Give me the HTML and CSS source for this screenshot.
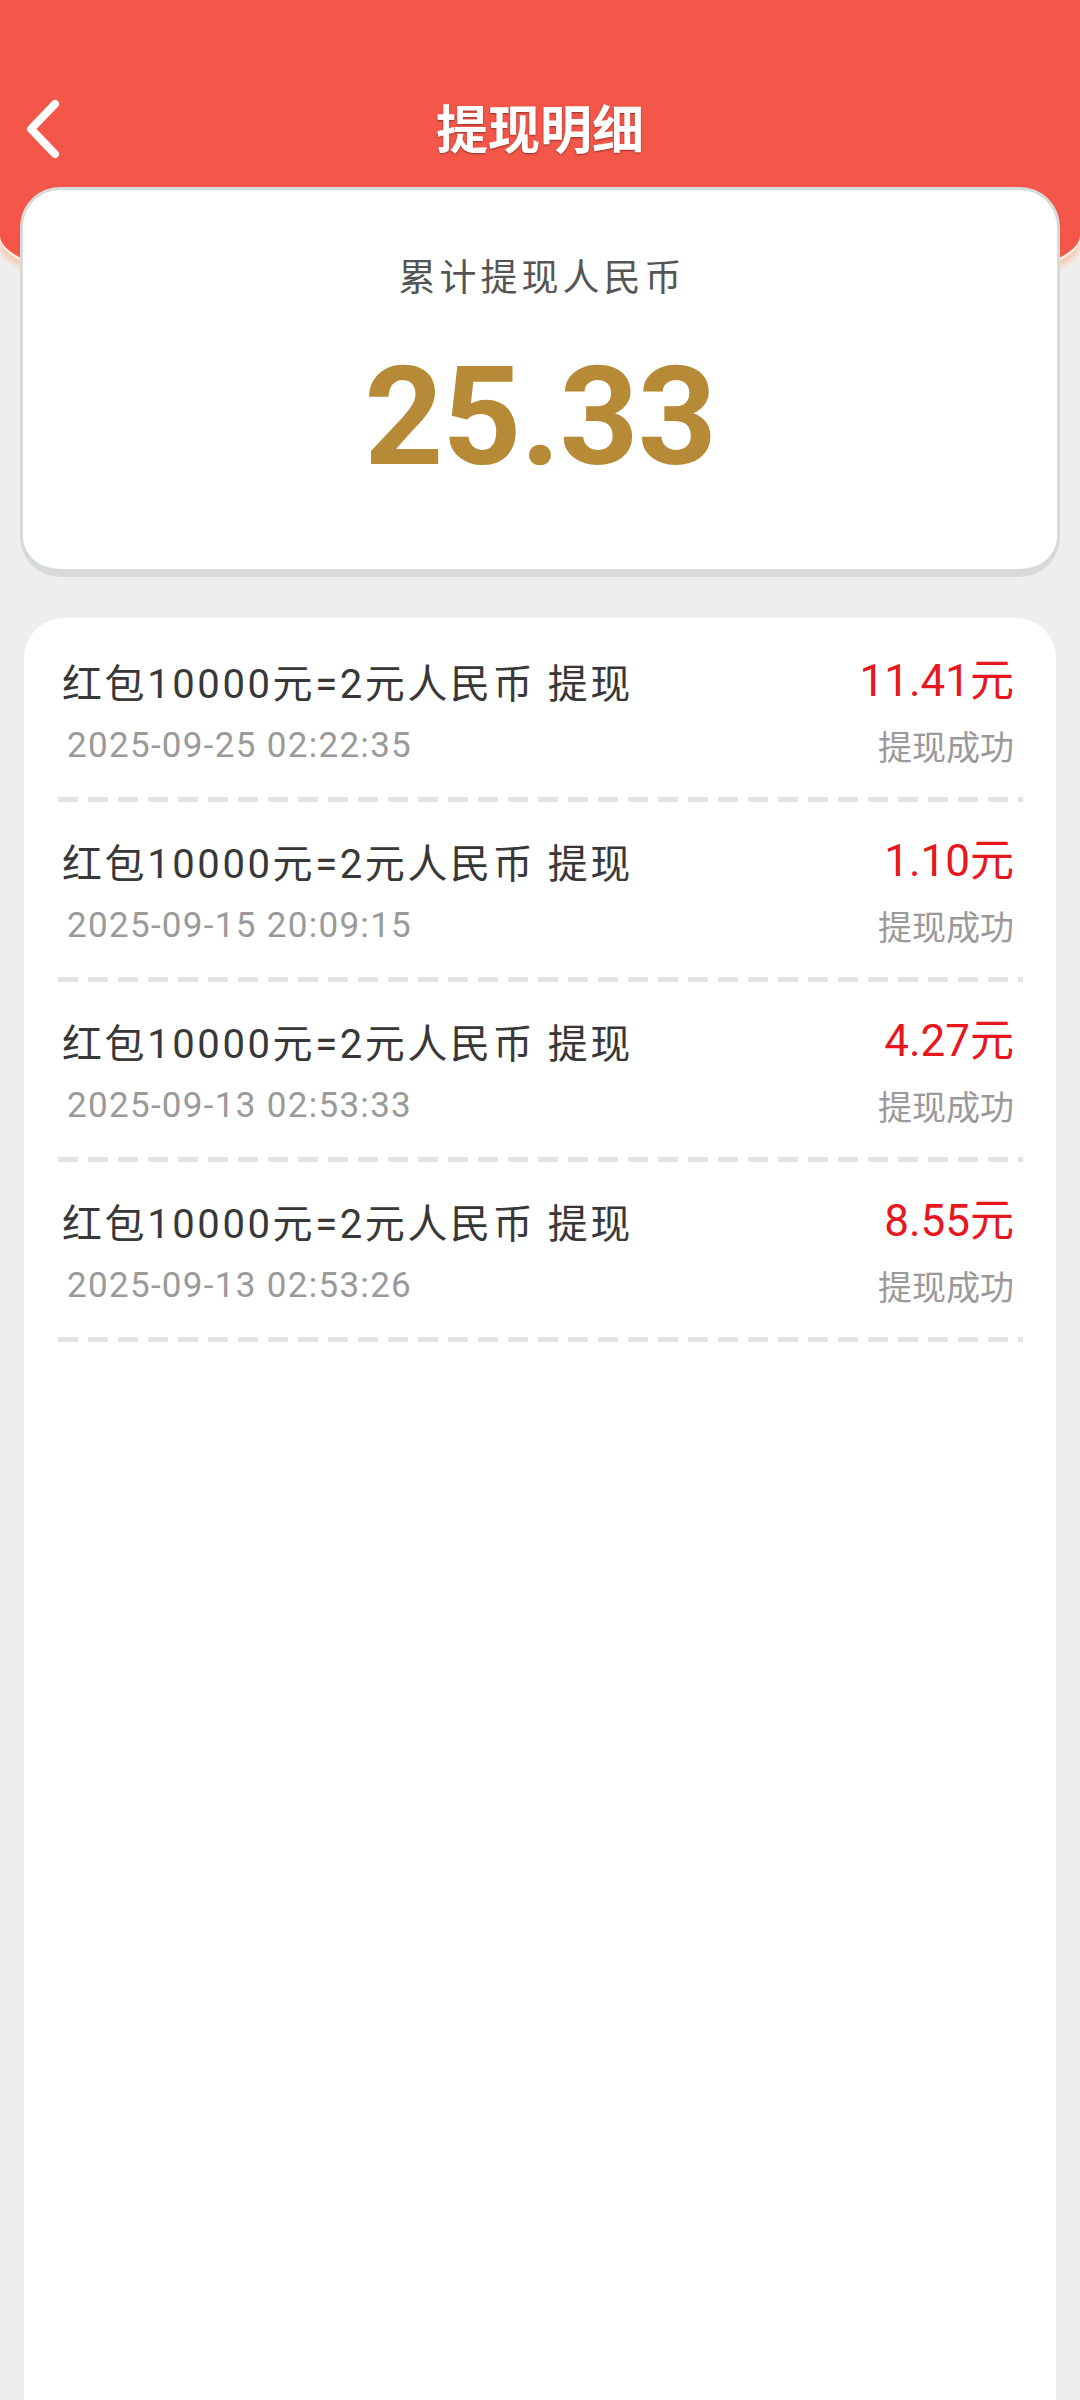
FILE: index.html
```html
<!DOCTYPE html>
<html lang="zh-CN">
<head>
<meta charset="utf-8">
<title>提现明细</title>
<link rel="stylesheet" href="styles.css">
</head>
<body>
<header class="header">
  <div class="nav">
    <span class="back">
      <svg width="40" height="60" viewBox="0 0 40 60"><polyline points="33,5 9,30 33,55" fill="none" stroke="#fff" stroke-width="8" stroke-linecap="round" stroke-linejoin="round"/></svg>
    </span>
    <h1 class="nav-title">提现明细</h1>
  </div>
</header>
<section class="summary">
  <div class="summary-label">累计提现人民币</div>
  <div class="summary-value">25.33</div>
</section>
<section class="list">
  <div class="row">
    <div class="row-main">
      <div class="row-title">红包10000元=2元人民币 提现</div>
      <div class="row-date">2025-09-25 02:22:35</div>
    </div>
    <div class="row-side">
      <div class="row-amount">11.41元</div>
      <div class="row-status">提现成功</div>
    </div>
  </div>
  <div class="sep"></div>
  <div class="row">
    <div class="row-main">
      <div class="row-title">红包10000元=2元人民币 提现</div>
      <div class="row-date">2025-09-15 20:09:15</div>
    </div>
    <div class="row-side">
      <div class="row-amount">1.10元</div>
      <div class="row-status">提现成功</div>
    </div>
  </div>
  <div class="sep"></div>
  <div class="row">
    <div class="row-main">
      <div class="row-title">红包10000元=2元人民币 提现</div>
      <div class="row-date">2025-09-13 02:53:33</div>
    </div>
    <div class="row-side">
      <div class="row-amount">4.27元</div>
      <div class="row-status">提现成功</div>
    </div>
  </div>
  <div class="sep"></div>
  <div class="row">
    <div class="row-main">
      <div class="row-title">红包10000元=2元人民币 提现</div>
      <div class="row-date">2025-09-13 02:53:26</div>
    </div>
    <div class="row-side">
      <div class="row-amount">8.55元</div>
      <div class="row-status">提现成功</div>
    </div>
  </div>
  <div class="sep"></div>
</section>
</body>
</html>
```
FILE: styles.css
```css
* { box-sizing: border-box; }
html, body { margin: 0; padding: 0; }
body {
  width: 1080px;
  min-height: 2400px;
  background: #eeeeee;
  font-family: Roboto, "Noto Sans CJK SC", sans-serif;
  display: flex;
  flex-direction: column;
  overflow: hidden;
}
.header {
  height: 316px;
  background: #f4574a;
  border-radius: 0 0 50% 50% / 0 0 80px 80px;
  box-shadow: 0 3px 0 #fff1ea, 0 9px 5px rgba(248, 196, 170, 0.9);
  padding-top: 90px;
}
.nav {
  height: 74px;
  display: flex;
  align-items: center;
  justify-content: center;
  position: relative;
}
.back {
  position: absolute;
  left: 22px;
  top: 9px;
  width: 40px;
  height: 60px;
  display: block;
}
.back svg { display: block; }
.nav-title {
  margin: 0;
  font-family: "Noto Sans CJK SC", sans-serif;
  font-size: 52px;
  font-weight: 700;
  color: #ffffff;
  line-height: 74px;
  text-shadow: 0 1px 2px rgba(60, 20, 10, 0.55);
}
.summary {
  position: relative;
  margin: -129px 20px 0;
  background: #ffffff;
  border: 3px solid #d6dbda;
  border-bottom-width: 8px;
  border-radius: 40px;
  padding: 60px 0 77px;
  text-align: center;
}
.summary-label {
  font-family: "Noto Sans CJK SC", sans-serif;
  font-size: 37px;
  line-height: 50px;
  color: #555555;
  letter-spacing: 4px;
  padding-left: 4px;
}
.summary-value {
  margin-top: 42px;
  font-family: Roboto, sans-serif;
  font-weight: 700;
  font-size: 138px;
  line-height: 150px;
  color: #b78a37;
  letter-spacing: -1px;
}
.list {
  flex: 1;
  margin: 41px 24px 0;
  background: #ffffff;
  border-radius: 40px 40px 0 0;
  padding-top: 4px;
}
.row {
  display: flex;
  justify-content: space-between;
  margin: 0 33px 0 34px;
  padding: 35px 9px 29px 4px;
}
.row-title {
  font-size: 40px;
  line-height: 56px;
  color: #383838;
  letter-spacing: 2.6px;
  white-space: nowrap;
}
.row-date {
  margin-top: 11px;
  padding-left: 5px;
  font-size: 35px;
  line-height: 44px;
  color: #9a9a9a;
  letter-spacing: 1.3px;
}
.row-side {
  text-align: right;
}
.row-amount {
  height: 56px;
  font-size: 44px;
  line-height: 48px;
  color: #e8161d;
  white-space: nowrap;
}
.row-status {
  margin-top: 11px;
  font-family: "Noto Sans CJK SC", sans-serif;
  font-size: 34px;
  line-height: 44px;
  color: #9a9a9a;
}
.sep {
  height: 5px;
  margin: 0 33px 0 34px;
  background: repeating-linear-gradient(to right, #e3e3e3 0 20px, transparent 20px 30px);
}
```
